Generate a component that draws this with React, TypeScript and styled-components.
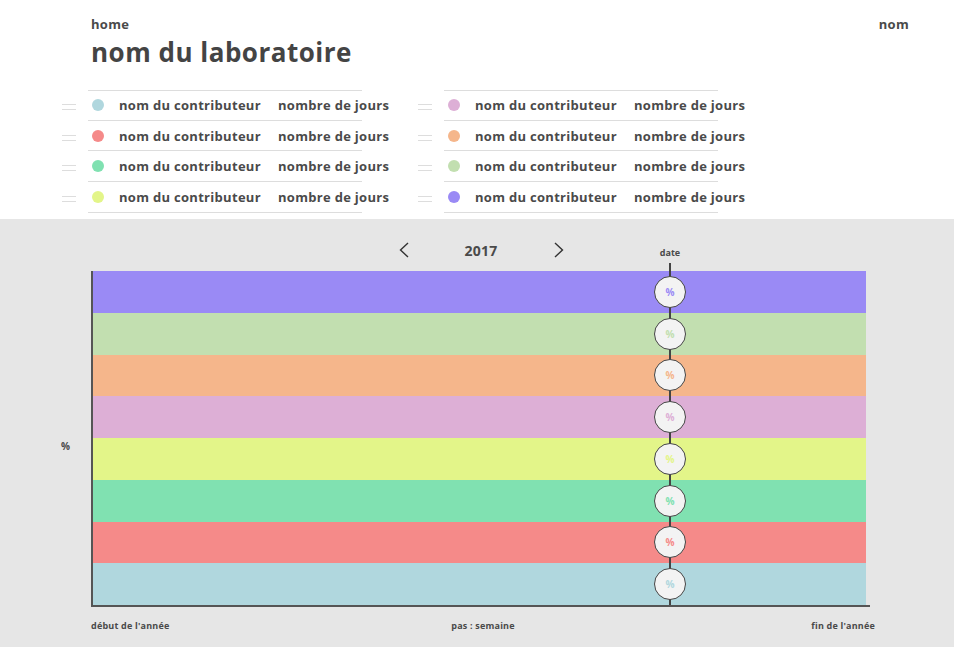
import React from 'react'
import styled, { createGlobalStyle } from 'styled-components'

const GlobalStyle = createGlobalStyle`
  body {
    margin: 0;
    font-family: 'Open Sans', 'DejaVu Sans', sans-serif;
    color: #4a4a4a;
  }
`

const contributors = [
  { color: '#b0d7de' },
  { color: '#f58a89' },
  { color: '#80e1b1' },
  { color: '#e3f589' },
  { color: '#ddafd6' },
  { color: '#f5b68b' },
  { color: '#c2dfb0' },
  { color: '#9a8af5' },
]

// bars are drawn top to bottom, so the last contributor comes first
const bars = [...contributors].reverse()

const DATE_X = 577

const Page = styled.div`
  width: 954px;
  height: 647px;
  display: flex;
  flex-direction: column;
  overflow: hidden;
`

const Header = styled.header`
  background: #fff;
  height: 219px;
  box-sizing: border-box;
  padding-top: 15px;
`

const TopBar = styled.div`
  display: flex;
  justify-content: space-between;
  padding: 0 45px 0 91px;
`

const SmallLink = styled.span`
  font-size: 13px;
  font-weight: 700;
  line-height: 18px;
  letter-spacing: 0.3px;
  color: #4a4a4a;
`

const Title = styled.h1`
  margin: 2px 0 0 91px;
  font-size: 26px;
  font-weight: 700;
  line-height: 34px;
  letter-spacing: 0.5px;
  color: #444;
`

const Legend = styled.div`
  display: grid;
  grid-template-columns: 356px 356px;
  margin: 21px 0 0 62px;
`

const LegendColumn = styled.div`
  display: flex;
  flex-direction: column;
`

const LegendRow = styled.div`
  display: flex;
  align-items: center;
  height: 30.7px;
`

const Handle = styled.div`
  width: 14px;
  height: 4px;
  margin-right: 12px;
  border-top: 1px solid #ddd;
  border-bottom: 1px solid #ddd;
  margin-top: 3px;
`

const RowBody = styled.div<{ $first: boolean }>`
  width: 274px;
  height: 100%;
  box-sizing: border-box;
  display: flex;
  align-items: center;
  border-bottom: 1px solid #ddd;
  border-top: ${(p) => (p.$first ? '1px solid #ddd' : 'none')};
  white-space: nowrap;
`

const Dot = styled.span<{ $color: string }>`
  width: 12px;
  height: 12px;
  border-radius: 50%;
  background: ${(p) => p.$color};
  margin: 0 15px 0 4px;
  flex: none;
`

const Name = styled.span`
  font-size: 13px;
  font-weight: 700;
  letter-spacing: 0.3px;
  width: 159px;
  flex: none;
`

const Days = styled.span`
  font-size: 13px;
  font-weight: 700;
  letter-spacing: 0.3px;
`

const ChartSection = styled.section`
  flex: 1;
  background: #e6e6e6;
  display: flex;
  flex-direction: column;
`

const Nav = styled.div`
  height: 52px;
  display: flex;
  align-items: center;
  justify-content: center;
  padding: 10px 0 0 8px;
  box-sizing: border-box;
`

const NavButton = styled.button`
  background: none;
  border: none;
  padding: 0;
  width: 10px;
  height: 16px;
  display: flex;
  cursor: pointer;
`

const Year = styled.span`
  font-size: 14px;
  font-weight: 700;
  letter-spacing: 0.3px;
  width: 145px;
  text-align: center;
`

const PlotRow = styled.div`
  display: grid;
  grid-template-columns: 91px 779px;
`

const YLabel = styled.span`
  font-size: 10px;
  font-weight: 700;
  padding: 168px 0 0 61px;
`

const Plot = styled.div`
  position: relative;
  height: 336px;
  border-left: 2px solid #555;
  border-bottom: 2px solid #555;
  box-sizing: border-box;
  padding-right: 4px;
  display: flex;
  flex-direction: column;
`

const Bar = styled.div<{ $color: string }>`
  position: relative;
  flex: 1;
  background: ${(p) => p.$color};
`

const DateLine = styled.div`
  position: absolute;
  left: ${DATE_X - 1}px;
  top: -8px;
  bottom: 0;
  width: 2px;
  background: #444;
  z-index: 1;
`

const DateLabel = styled.span`
  position: absolute;
  left: ${DATE_X - 20}px;
  top: -25px;
  width: 40px;
  text-align: center;
  font-size: 9px;
  font-weight: 700;
`

const Marker = styled.div<{ $color: string }>`
  position: absolute;
  left: ${DATE_X - 16}px;
  top: 50%;
  transform: translateY(-50%);
  width: 32px;
  height: 32px;
  box-sizing: border-box;
  border-radius: 50%;
  border: 1px solid #444;
  background: #f3f3f3;
  z-index: 2;
  display: flex;
  align-items: center;
  justify-content: center;
  font-size: 10px;
  font-weight: 700;
  color: ${(p) => p.$color};
`

const AxisLabels = styled.div`
  display: grid;
  grid-template-columns: 1fr auto 1fr;
  margin: 12px 79px 0 91px;
  font-size: 9px;
  font-weight: 700;
  letter-spacing: 0.2px;
`

const AxisEnd = styled.span`
  text-align: right;
`

const Chevron = ({ dir }: { dir: 'left' | 'right' }) => (
  <svg width="10" height="16" viewBox="0 0 10 16">
    <path
      d={dir === 'left' ? 'M9 1 L1.5 8 L9 15' : 'M1 1 L8.5 8 L1 15'}
      fill="none"
      stroke="#333"
      strokeWidth="1.4"
    />
  </svg>
)

const LegendBlock = ({ items, first }: { items: { color: string }[]; first: number }) => (
  <LegendColumn>
    {items.map((c, i) => (
      <LegendRow key={first + i}>
        <Handle />
        <RowBody $first={i === 0}>
          <Dot $color={c.color} />
          <Name>nom du contributeur</Name>
          <Days>nombre de jours</Days>
        </RowBody>
      </LegendRow>
    ))}
  </LegendColumn>
)

export default function App() {
  return (
    <Page>
      <GlobalStyle />
      <Header>
        <TopBar>
          <SmallLink>home</SmallLink>
          <SmallLink>nom</SmallLink>
        </TopBar>
        <Title>nom du laboratoire</Title>
        <Legend>
          <LegendBlock items={contributors.slice(0, 4)} first={0} />
          <LegendBlock items={contributors.slice(4)} first={4} />
        </Legend>
      </Header>

      <ChartSection>
        <Nav>
          <NavButton aria-label="année précédente">
            <Chevron dir="left" />
          </NavButton>
          <Year>2017</Year>
          <NavButton aria-label="année suivante">
            <Chevron dir="right" />
          </NavButton>
        </Nav>

        <PlotRow>
          <YLabel>%</YLabel>
          <Plot>
            <DateLabel>date</DateLabel>
            <DateLine />
            {bars.map((b, i) => (
              <Bar key={i} $color={b.color}>
                <Marker $color={b.color}>%</Marker>
              </Bar>
            ))}
          </Plot>
        </PlotRow>

        <AxisLabels>
          <span>début de l'année</span>
          <span>pas : semaine</span>
          <AxisEnd>fin de l'année</AxisEnd>
        </AxisLabels>
      </ChartSection>
    </Page>
  )
}
